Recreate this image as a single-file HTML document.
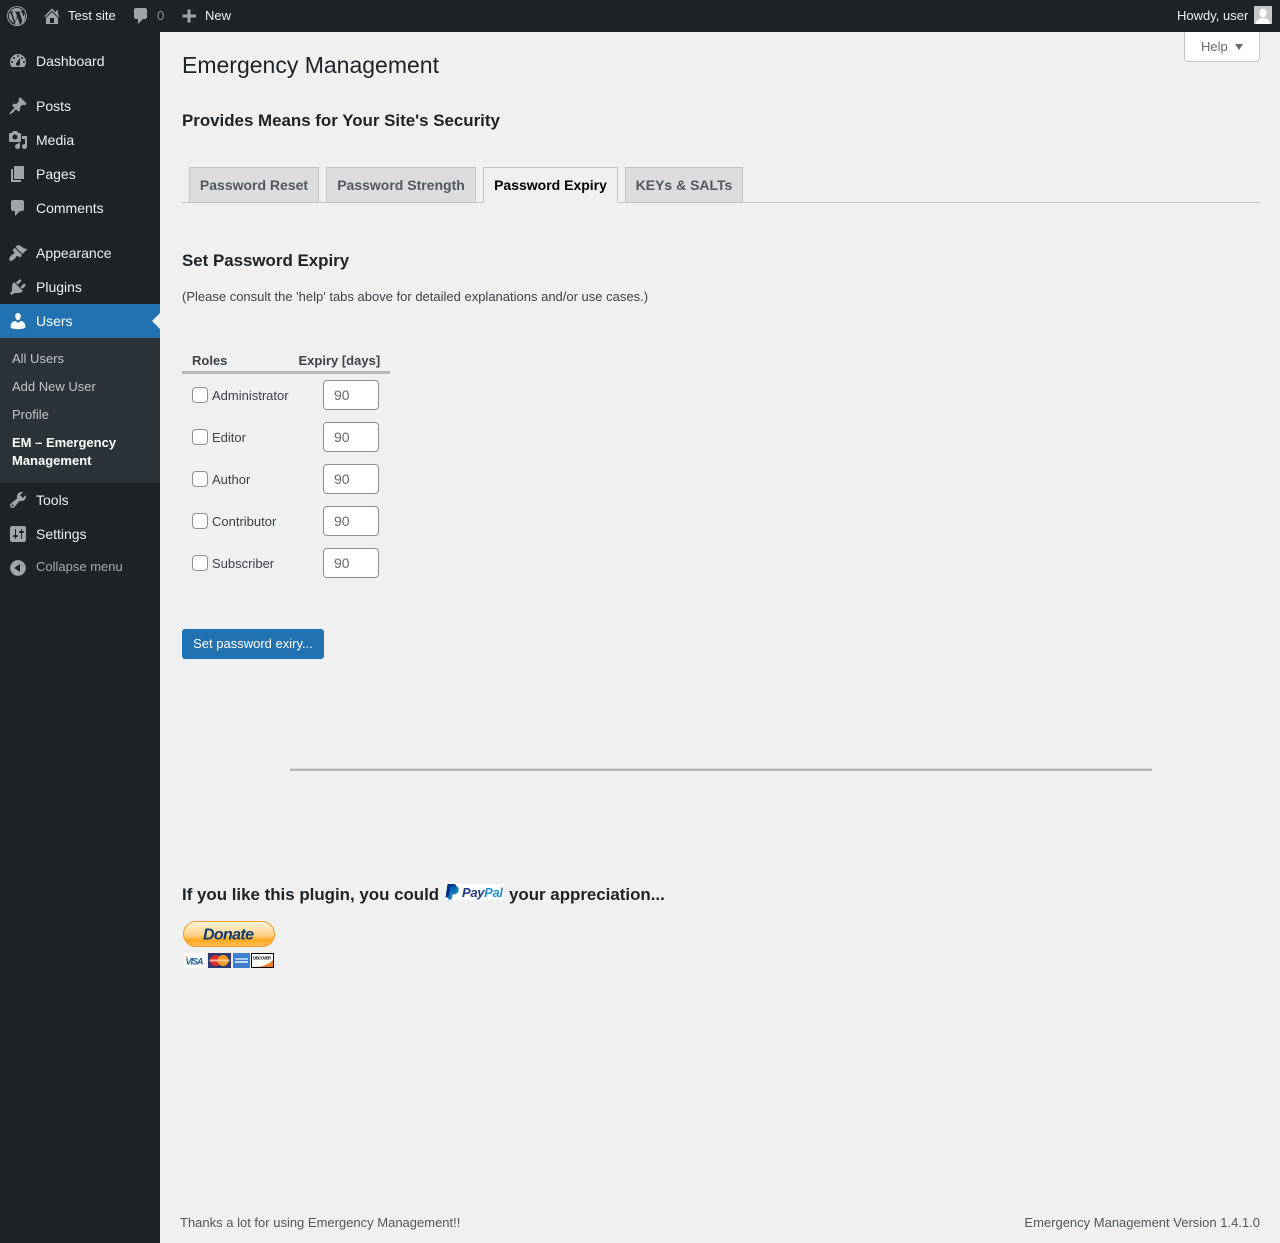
<!DOCTYPE html>
<html lang="en"><head><meta charset="utf-8"><title>Emergency Management</title>
<style>
*{box-sizing:border-box}
html,body{margin:0;padding:0}
body{width:1280px;height:1243px;position:relative;overflow:hidden;background:#f0f0f1;font:13px/18px "Liberation Sans",sans-serif;color:#3c434a}
.a{position:absolute;white-space:nowrap}
svg{position:absolute;display:block}
#bar{left:0;top:0;width:1280px;height:32px;background:#1d2327}
#side{left:0;top:32px;width:160px;height:1211px;background:#1d2327}
.bt{color:#f0f0f1;font-size:13px;line-height:32px;top:0}
.m{left:36px;color:#f0f0f1;font-size:14px;line-height:18px}
.i{fill:#a0a5aa;left:8px;width:20px;height:20px}
.s{left:12px;color:#c3c4c7;font-size:13px;line-height:18px}
.tab{top:167px;height:36px;border:1px solid #c3c4c7;background:#dcdcde;color:#50575e;font-weight:600;font-size:14px;line-height:34px;text-align:center}
h1,h2{margin:0;font-weight:600;position:absolute;white-space:nowrap;color:#1d2327}
h2{font-size:16.9px;line-height:22px;left:182px}
.cb{left:192px;width:16px;height:16px;border:1px solid #8c8f94;border-radius:4px;background:#fff}
.lb{left:212px;font-size:13px;line-height:18px;color:#3c434a}
.inp{left:323px;width:56px;height:30px;border:1px solid #8c8f94;border-radius:4px;background:#fff;color:#646970;font-size:14px;line-height:28px;padding-left:10px}
</style></head><body>

<div class="a" id="bar"></div>
<div class="a" id="side"></div>

<svg style="left:7px;top:6px" width="20" height="20" viewBox="0 0 20 20" fill="#9ca1a6"><path fill-rule="evenodd" d="M10 0a10 10 0 1 0 0 20a10 10 0 0 0 0-20zM10 1a9 9 0 1 1 0 18a9 9 0 0 1 0-18z"/><path d="M3.200 6.200L7 16.700C4 15.400 2 12.800 2 10c0-1.400.4-2.700 1.200-3.800zM16 9.600c0-1-.5-1.700-.8-2.300-.4-.7-.8-1.200-.8-1.800 0-.7.500-1.300 1.200-1.300C14.200 2.800 12.200 2 10 2 7.200 2 4.800 3.400 3.300 5.600l2.700-.1c.4 0 .5.700 0 .8l-1 .1 3.100 9.300 1.900-5.600-1.300-3.700-.9-.1c-.4 0-.4-.8.1-.8l2.700.1 2.800-.1c.4 0 .5.700 0 .8l-.9.1 3.100 9.200.8-2.900c.3-1 .6-1.800.6-2.500zM10.200 11l-2.600 7.500c.8.200 1.600.4 2.400.4 1 0 2-.2 2.900-.5l-.1-.1zM17.200 6.300c.1.300.1.600.1 1 0 1-.2 2-.7 3.400l-2.700 7.700c2.600-1.500 4.200-4.300 4.200-7.400 0-1.700-.3-3.200-.9-4.700z"/></svg>
<svg class="i" style="left:42px;top:6px" viewBox="0 0 20 20"><path d="M16 8.500l1.530 1.530-1.060 1.060L10 4.620l-6.470 6.470-1.060-1.060L10 2.500l4 4v-2h2v4zm-6-2.460l6 5.990V18H4v-5.970zM12 17v-5H8v5h4z"/></svg>
<div class="a bt" style="left:68px">Test site</div>
<svg class="i" style="left:131px;top:6px" viewBox="0 0 20 20"><path d="M5 2h9c1.100 0 2 .9 2 2v7c0 1.100-.9 2-2 2h-2l-5 5v-5H5c-1.100 0-2-.9-2-2V4c0-1.100.9-2 2-2z"/></svg>
<div class="a bt" style="left:157px;color:#8c8f94">0</div>
<svg class="i" style="left:179px;top:6px" viewBox="0 0 20 20"><path d="M8.500 3.500h3v5H17v3h-5.500v5h-3v-5H3.500v-3h5z"/></svg>
<div class="a bt" style="left:205px">New</div>
<div class="a bt" style="left:1177px">Howdy, user</div>
<div class="a" style="left:1254px;top:6px;width:18px;height:18px;background:#c8c8c8;overflow:hidden"><svg width="18" height="18" viewBox="0 0 18 18" fill="#fff"><ellipse cx="9" cy="7" rx="3.600" ry="4.500"/><path d="M2 18c0-4 3-6 7-6s7 2 7 6z"/></svg></div>

<svg class="i" style="top:51px" viewBox="0 0 20 20"><path d="M3.760 16h12.480c1.100-1.370 1.760-3.110 1.760-5 0-4.420-3.580-8-8-8s-8 3.580-8 8c0 1.890.66 3.630 1.760 5zM10 4c.55 0 1 .45 1 1s-.45 1-1 1-1-.45-1-1 .45-1 1-1zM6 6c.55 0 1 .45 1 1s-.45 1-1 1-1-.45-1-1 .45-1 1-1zm8 0c.55 0 1 .45 1 1s-.45 1-1 1-1-.45-1-1 .45-1 1-1zm-5.370 5.550L12 7v6c0 1.100-.9 2-2 2s-2-.9-2-2c0-.57.24-1.080.63-1.450zM4 10c.55 0 1 .45 1 1s-.45 1-1 1-1-.45-1-1 .45-1 1-1zm12 0c.55 0 1 .45 1 1s-.45 1-1 1-1-.45-1-1 .45-1 1-1z" fill-rule="evenodd"/></svg>
<div class="a m" style="top:52px">Dashboard</div>

<svg class="i" style="top:96px" viewBox="0 0 20 20"><path d="M10.440 3.020l1.820-1.820 6.360 6.350-1.830 1.820c-1.050-.68-2.480-.57-3.410.36l-.75.75c-.92.93-1.040 2.350-.35 3.410l-1.830 1.820-2.410-2.410-2.800 2.790c-.42.42-3.380 2.710-3.800 2.290s1.860-3.390 2.280-3.810l2.790-2.790L4.100 9.360l1.830-1.820c1.050.69 2.480.57 3.400-.36l.75-.75c.93-.92 1.050-2.350.36-3.410z"/></svg>
<div class="a m" style="top:97px">Posts</div>

<svg class="i" style="top:130px" viewBox="0 0 20 20"><path fill-rule="evenodd" d="M13 11V4c0-.55-.45-1-1-1h-1.670L9 1H5L3.670 3H2c-.55 0-1 .45-1 1v7c0 .55.45 1 1 1h10c.55 0 1-.45 1-1zM7 4.500c1.380 0 2.500 1.120 2.500 2.500S8.380 9.500 7 9.500 4.500 8.380 4.500 7 5.620 4.500 7 4.500zM14 6h5v10.500c0 1.380-1.120 2.500-2.500 2.500S14 17.880 14 16.500s1.120-2.500 2.500-2.500c.17 0 .34.02.5.05V9h-3V6zm-4 8.050V13h2v3.500c0 1.380-1.120 2.500-2.500 2.500S7 17.880 7 16.500 8.120 14 9.500 14c.17 0 .34.02.5.05z"/></svg>
<div class="a m" style="top:131px">Media</div>

<svg class="i" style="top:164px" viewBox="0 0 20 20"><path d="M6 15V2h10v13H6zm-1 1h8v2H3V5h2v11z"/></svg>
<div class="a m" style="top:165px">Pages</div>

<svg class="i" style="top:198px" viewBox="0 0 20 20"><path d="M5 2h9c1.100 0 2 .9 2 2v7c0 1.100-.9 2-2 2h-2l-5 5v-5H5c-1.100 0-2-.9-2-2V4c0-1.100.9-2 2-2z"/></svg>
<div class="a m" style="top:199px">Comments</div>

<svg class="i" style="top:243px" viewBox="0 0 20 20"><path d="M14.480 11.060L7.410 3.990l1.500-1.500c.5-.56 2.300-.47 3.510.32 1.210.8 1.430 1.280 2.910 2.100 1.180.64 2.450 1.260 4.450.85zm-.71.71L6.700 4.700 4.930 6.470c-.39.39-.39 1.020 0 1.410l1.060 1.060c.39.39.39 1.030 0 1.420-.6.6-1.430 1.110-2.210 1.690-.35.26-.7.53-1.010.84-1.340 1.340-1.990 3.890-1.240 4.640.75.75 3.300.1 4.640-1.240.31-.31.58-.66.84-1.010.58-.78 1.090-1.610 1.690-2.210.39-.39 1.030-.39 1.420 0l1.060 1.060c.39.39 1.020.39 1.410 0z"/></svg>
<div class="a m" style="top:244px">Appearance</div>

<svg class="i" style="top:277px" viewBox="0 0 20 20"><path d="M13.110 4.360L9.870 7.600 8 5.730l3.240-3.240c.35-.34 1.050-.2 1.560.32.52.51.66 1.210.31 1.550zm-8 1.770l.91-1.120 9.010 9.010-1.190.84c-.71.71-2.630 1.160-3.820 1.160H6.140L4.900 17.260c-.59.59-1.540.59-2.120 0-.59-.58-.59-1.530 0-2.120l1.240-1.240v-3.880c0-1.130.4-3.190 1.090-3.890zm7.260 3.970l3.240-3.240c.34-.35 1.040-.21 1.550.31.52.51.66 1.210.31 1.550l-3.240 3.250z"/></svg>
<div class="a m" style="top:278px">Plugins</div>

<div class="a" style="left:0;top:304px;width:160px;height:34px;background:#2271b1"></div>
<svg class="i" style="top:311px;fill:#fff" viewBox="0 0 20 20"><path d="M10 9.250c-2.270 0-2.730-3.440-2.730-3.440C7 4.020 7.820 2 9.970 2c2.160 0 2.980 2.020 2.710 3.810 0 0-.41 3.440-2.680 3.440zm0 2.570L12.720 10c2.390 0 4.520 2.330 4.520 4.530v2.490s-3.650 1.130-7.240 1.130c-3.650 0-7.240-1.130-7.240-1.130v-2.490c0-2.250 1.940-4.480 4.470-4.480z"/></svg>
<div class="a m" style="top:312px;color:#fff">Users</div>
<div class="a" style="left:152px;top:313px;width:0;height:0;border:8px solid transparent;border-left:0;border-right-color:#f0f0f1"></div>

<div class="a" style="left:0;top:338px;width:160px;height:145px;background:#2c3338"></div>
<div class="a s" style="top:350px">All Users</div>
<div class="a s" style="top:378px">Add New User</div>
<div class="a s" style="top:406px">Profile</div>
<div class="a s" style="top:434px;color:#fff;font-weight:600">EM – Emergency</div>
<div class="a s" style="top:452px;color:#fff;font-weight:600">Management</div>

<svg class="i" style="top:490px" viewBox="0 0 20 20"><path fill-rule="evenodd" d="M16.680 9.770c-1.340 1.340-3.300 1.670-4.950.99l-5.410 6.520c-.99.99-2.590.99-3.580 0s-.99-2.590 0-3.570l6.520-5.420c-.68-1.650-.35-3.610.99-4.950 1.280-1.280 3.120-1.620 4.720-1.060l-2.890 2.890 2.820 2.820 2.860-2.870c.53 1.580.18 3.390-1.080 4.650zM3.810 16.210c.4.39 1.040.39 1.430 0 .4-.4.4-1.040 0-1.430-.39-.4-1.030-.4-1.430 0-.39.39-.39 1.030 0 1.430z"/></svg>
<div class="a m" style="top:491px">Tools</div>

<svg class="i" style="top:524px" viewBox="0 0 20 20"><path fill-rule="evenodd" d="M18 16V4c0-1.100-.9-2-2-2H4c-1.100 0-2 .9-2 2v12c0 1.100.9 2 2 2h12c1.100 0 2-.9 2-2zM8 11h1c.55 0 1 .45 1 1s-.45 1-1 1H8v1.500c0 .28-.22.5-.5.5s-.5-.22-.5-.5V13H6c-.55 0-1-.45-1-1s.45-1 1-1h1V5.500c0-.28.22-.5.5-.5s.5.22.5.5V11zm5-2h-1c-.55 0-1-.45-1-1s.45-1 1-1h1V5.500c0-.28.22-.5.5-.5s.5.22.5.5V7h1c.55 0 1 .45 1 1s-.45 1-1 1h-1v5.500c0 .28-.22.5-.5.5s-.5-.22-.5-.5V9z"/></svg>
<div class="a m" style="top:525px">Settings</div>

<svg class="i" style="top:558px" viewBox="0 0 20 20"><path fill-rule="evenodd" d="M10 2.160c4.330 0 7.840 3.510 7.840 7.840s-3.510 7.840-7.840 7.840S2.160 14.330 2.160 10 5.710 2.160 10 2.160zm2 11.720V6.120L6.180 9.970z"/></svg>
<div class="a" style="left:36px;top:558px;font-size:13px;line-height:18px;color:#a7aaad">Collapse menu</div>

<div class="a" style="left:1184px;top:32px;width:76px;height:30px;background:#fff;border:1px solid #c3c4c7;border-top:0;border-radius:0 0 4px 4px;color:#646970;font-size:13px;line-height:29px;padding-left:16px">Help</div>
<div class="a" style="left:1235px;top:44px;width:0;height:0;border:4.500px solid transparent;border-bottom:0;border-top:6px solid #646970"></div>

<h1 style="left:182px;top:50px;font-size:23px;line-height:30px;font-weight:400">Emergency Management</h1>
<h2 style="top:110px">Provides Means for Your Site's Security</h2>

<div class="a" style="left:182px;top:202px;width:1078px;height:1px;background:#c3c4c7"></div>
<div class="a tab" style="left:189px;width:130px">Password Reset</div>
<div class="a tab" style="left:326px;width:150px">Password Strength</div>
<div class="a tab" style="left:483px;width:135px;background:#f0f0f1;color:#000;border-bottom-color:#f0f0f1">Password Expiry</div>
<div class="a tab" style="left:625px;width:118px">KEYs &amp; SALTs</div>

<h2 style="top:250px">Set Password Expiry</h2>
<div class="a" style="left:182px;top:288px">(Please consult the 'help' tabs above for detailed explanations and/or use cases.)</div>

<div class="a" style="left:192px;top:352px;font-weight:600;color:#3c434a">Roles</div>
<div class="a" style="left:298.500px;top:352px;font-weight:600;color:#3c434a">Expiry [days]</div>
<div class="a" style="left:182px;top:371px;width:208px;height:3px;background:#b8b8b8"></div>

<div class="a cb" style="top:387px"></div><div class="a lb" style="top:387px">Administrator</div><div class="a inp" style="top:380px">90</div>
<div class="a cb" style="top:429px"></div><div class="a lb" style="top:429px">Editor</div><div class="a inp" style="top:422px">90</div>
<div class="a cb" style="top:471px"></div><div class="a lb" style="top:471px">Author</div><div class="a inp" style="top:464px">90</div>
<div class="a cb" style="top:513px"></div><div class="a lb" style="top:513px">Contributor</div><div class="a inp" style="top:506px">90</div>
<div class="a cb" style="top:555px"></div><div class="a lb" style="top:555px">Subscriber</div><div class="a inp" style="top:548px">90</div>

<div class="a" style="left:182px;top:629px;width:142px;height:30px;background:#2271b1;border:1px solid #2271b1;border-radius:3px;color:#fff;font-size:13px;line-height:27px;text-align:center">Set password exiry...</div>

<div class="a" style="left:290px;top:768px;width:862px;height:3px;background:#b2b2b2;border-top:1px solid #d8d8d8"></div>

<h2 style="top:884px">If you like this plugin, you could</h2>
<svg style="left:445px;top:884px" width="59" height="16" viewBox="0 0 59 16"><rect width="59" height="16" fill="#fff"/><path d="M2.500 0h5.500c2.800 0 4 1.500 3.500 3.800C11 6.600 9.300 8 6.500 8H5.200l-.9 5.500H.5z" fill="#003087"/><path d="M5.500 2.500h5c2.500 0 3.600 1.400 3.100 3.800-.5 2.700-2.300 4.200-4.900 4.200H7.500l-.8 5H3z" fill="#0070ba" opacity=".9"/><text x="17" y="13" font-family="Liberation Sans,sans-serif" font-size="13" font-weight="700" font-style="italic" fill="#253b80" textLength="41">Pay<tspan fill="#2b8ed0">Pal</tspan></text></svg>
<h2 style="top:884px;left:509px">your appreciation...</h2>

<svg style="left:182px;top:920px" width="94" height="50" viewBox="0 0 94 50">
<defs><linearGradient id="g" x1="0" y1="0" x2="0" y2="1"><stop offset="0" stop-color="#fff6e0"/><stop offset=".3" stop-color="#ffe3b0"/><stop offset=".55" stop-color="#ffd089"/><stop offset=".75" stop-color="#ffa920"/><stop offset="1" stop-color="#ffc15c"/></linearGradient></defs>
<rect x="1.500" y="1.500" width="91" height="25" rx="12.500" fill="url(#g)" stroke="#f39a2b" stroke-width="1"/>
<text x="21" y="19.500" font-family="Liberation Sans,sans-serif" font-size="16" font-weight="700" font-style="italic" fill="#0f3a6e" textLength="51">Donate</text>
<rect x="2" y="33" width="22" height="15" fill="#fff"/><text x="3.500" y="44.500" font-family="Liberation Sans,sans-serif" font-size="9" font-weight="700" font-style="italic" fill="#1f5c9e" textLength="18">VISA</text><path d="M3 36l3 1-1 2z" fill="#f2a33a"/>
<rect x="26" y="33" width="23" height="15" fill="#2d3a73"/><circle cx="33.500" cy="40.500" r="5.500" fill="#e02b2b"/><circle cx="41" cy="40.500" r="5.500" fill="#f59b23"/><rect x="27.500" y="39.500" width="20" height="2" fill="#f6d7b0" opacity=".8"/>
<rect x="51" y="33" width="17" height="15" fill="#3f7fcf"/><rect x="53" y="38" width="13" height="2" fill="#a9c9ee"/><rect x="53" y="41" width="13" height="2" fill="#c3daf2"/>
<rect x="69.500" y="33.500" width="22" height="14" fill="#fff" stroke="#000" stroke-width="1"/><path d="M91 40v7H76c6-1 11-3 15-7z" fill="#ee7c26"/><text x="71" y="39.500" font-family="Liberation Sans,sans-serif" font-size="4.500" font-weight="700" fill="#222" textLength="18">DISCOVER</text>
</svg>

<div class="a" style="left:180px;top:1214px;font-size:13px;color:#50575e">Thanks a lot for using Emergency Management!!</div>
<div class="a" style="right:20px;top:1214px;font-size:13px;color:#50575e">Emergency Management Version 1.4.1.0</div>

</body></html>
